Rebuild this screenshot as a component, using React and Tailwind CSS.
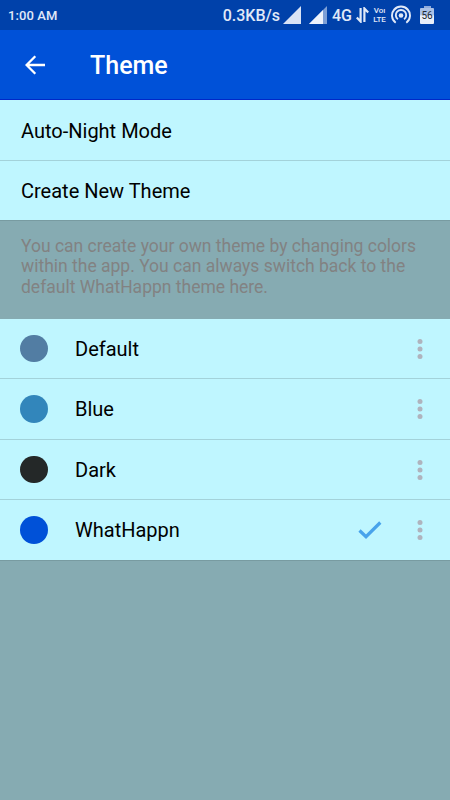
const THEMES = [
  { name: "Default", dot: "bg-[#527da3]", height: "h-[60px]" },
  { name: "Blue", dot: "bg-[#3286bb]", height: "h-[61px]" },
  { name: "Dark", dot: "bg-[#242828]", height: "h-[60px]" },
  { name: "WhatHappn", dot: "bg-[#0051d8]", height: "h-[60px]", selected: true },
];

function StatusBar() {
  return (
    <div className="flex h-[30px] items-center bg-[#0041aa] pl-2 pr-4 text-[#e0e9f8]">
      <span className="pt-px text-[13px] font-medium tracking-[0.1px]">1:00 AM</span>
      <div className="ml-auto flex items-center">
        <span className="whitespace-nowrap pt-[2px] text-base font-medium">0.3KB/s</span>

        {/* Signal for both SIMs */}
        <svg className="ml-[3px] shrink-0" width="18" height="18" viewBox="0 0 18 18">
          <path d="M18 0v18H0z" fill="#d9e3f5" />
        </svg>
        <svg className="ml-2 shrink-0" width="18" height="18" viewBox="0 0 18 18">
          <path d="M18 0v18H0z" fill="#7d9fd6" />
          <path d="M14 4v14H0z" fill="#eef3fc" />
        </svg>

        <span className="ml-[5px] pt-[2px] text-base font-medium">4G</span>

        <svg className="ml-1 shrink-0" width="13" height="16" viewBox="0 0 13 16" fill="none" stroke="currentColor" strokeWidth="2.2">
          <path d="M4.6 1v13.5L.8 10.4M8.4 15V1.5l3.8 4.1" />
        </svg>

        <div className="ml-[3px] flex w-[15px] flex-col items-center text-[8px] font-medium leading-[9px]">
          <span>Voı</span>
          <span>LTE</span>
        </div>

        <svg className="ml-1 shrink-0" width="20" height="20" viewBox="0 0 20 20" fill="none" stroke="currentColor" strokeWidth="1.9">
          <path d="M4.7 17.8A9 9 0 1 1 15.3 17.8" />
          <path d="M6.9 14.3A5.2 5.2 0 1 1 13.1 14.3" />
          <circle cx="10" cy="10.5" r="2.3" fill="currentColor" stroke="none" />
        </svg>

        <div className="ml-[9px] flex flex-col items-center">
          <div className="h-[2px] w-[7px] bg-[#8fabdc]" />
          <div className="flex h-4 w-[14px] items-center justify-center rounded-[1px] bg-linear-to-b from-[#a9c0e6] from-40% to-[#e9effa] to-50% text-[10px] leading-none text-[#202832]">
            56
          </div>
        </div>
      </div>
    </div>
  );
}

function Header() {
  return (
    <header className="flex h-[70px] items-center border-b border-[#0028c8] bg-[#0051d8] pl-[25px] text-white">
      <svg width="20" height="20" viewBox="0 0 20 20" fill="none" stroke="currentColor" strokeWidth="2.3">
        <path d="M20 10H1.5M10.3 1.2 1.6 10l8.7 8.8" />
      </svg>
      <h1 className="ml-[45px] pt-px text-[25px] font-medium leading-none">Theme</h1>
    </header>
  );
}

function ThemeRow({ theme, last }) {
  return (
    <div className={`flex items-center pl-5 pr-[27px] ${theme.height} ${last ? "" : "border-b border-[#a3d2da]"}`}>
      <span className={`size-[27.5px] rounded-full ${theme.dot}`} />
      <span className="ml-[27.5px] text-xl">{theme.name}</span>
      <div className="ml-auto flex items-center">
        {theme.selected && (
          <svg className="mr-[35px]" width="24" height="18" viewBox="0 0 24 18" fill="none" stroke="#48a3eb" strokeWidth="3.2">
            <path d="M1.5 9.5 8 15.7 22.3 1.5" />
          </svg>
        )}
        <svg width="6" height="20" viewBox="0 0 6 20" fill="#afb3bd">
          <circle cx="3" cy="2.5" r="2.5" />
          <circle cx="3" cy="10" r="2.5" />
          <circle cx="3" cy="17.5" r="2.5" />
        </svg>
      </div>
    </div>
  );
}

export default function App() {
  return (
    <div className="flex h-[800px] w-[450px] flex-col overflow-hidden bg-[#86abb2] font-['Roboto',sans-serif] text-black">
      <StatusBar />
      <Header />

      <div className="bg-[#bff6ff] text-xl">
        <div className="flex h-[61px] items-center border-b border-[#a3d2da] pl-[21px] pt-[2px]">Auto-Night Mode</div>
        <div className="flex h-[59px] items-center pl-[21px]">Create New Theme</div>
      </div>

      <p className="h-[99px] border-t border-[#789ba1] pl-[21px] pr-5 pt-[15px] text-[17.5px] leading-[20.3px] text-[#828282]">
        You can create your own theme by changing colors within the app. You can always switch back to the default WhatHappn theme here.
      </p>

      <div className="bg-[#bff6ff]">
        {THEMES.map((theme, i) => (
          <ThemeRow key={theme.name} theme={theme} last={i === THEMES.length - 1} />
        ))}
      </div>
      <div className="h-px bg-[#789ba1]" />
    </div>
  );
}
